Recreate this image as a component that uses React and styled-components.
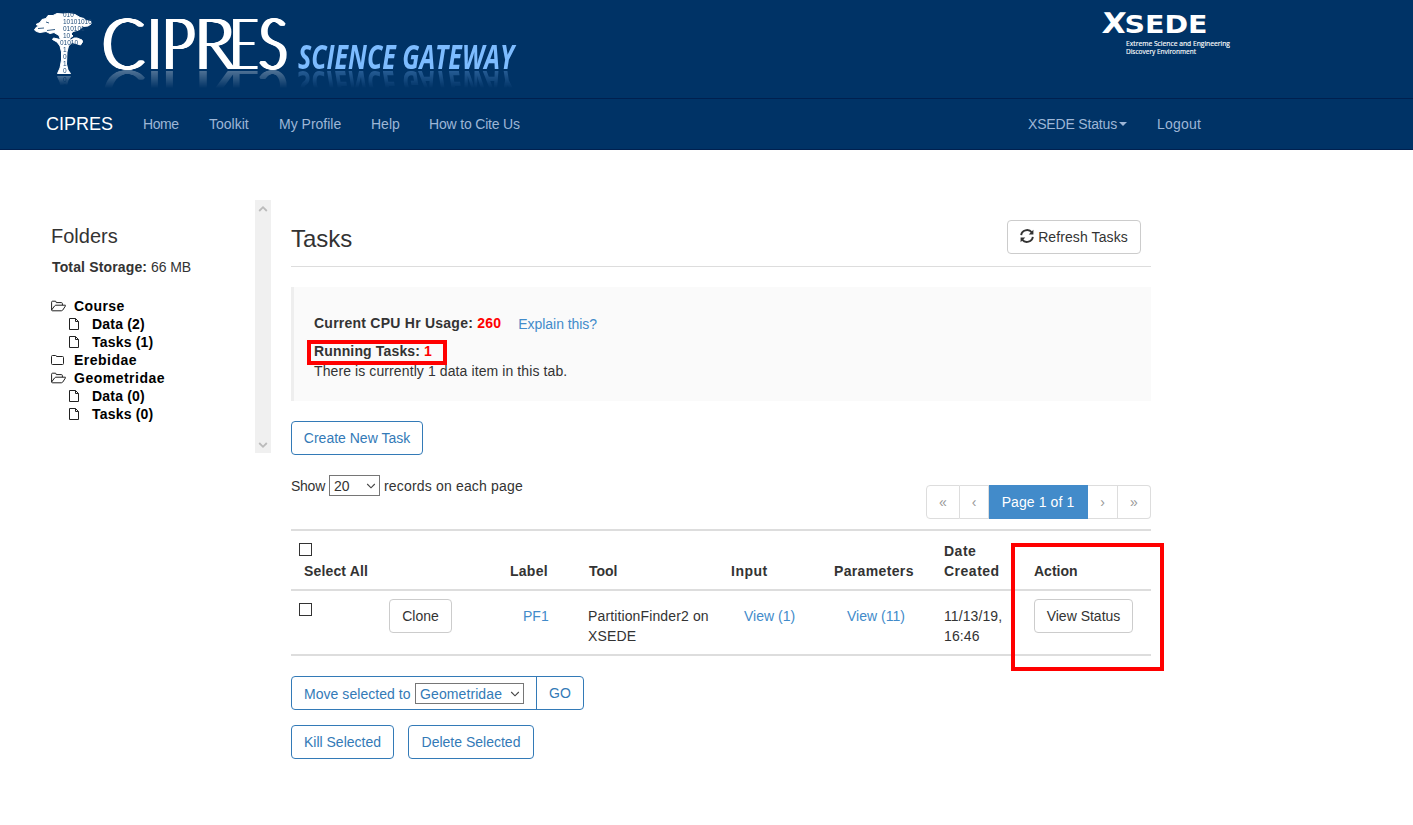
import React from 'react';
import styled, { createGlobalStyle, css } from 'styled-components';

const Global = createGlobalStyle`
  *, *::before, *::after { box-sizing: border-box; }
  body {
    margin: 0;
    background: #fff;
    color: #333;
    font: 14px/20px "Liberation Sans", Arial, sans-serif;
  }
`;

const Page = styled.div`
  min-height: 825px;
  overflow: hidden;
`;

const Banner = styled.header`
  height: 98px;
  background: #003366;
  display: flex;
  padding: 0 173px 0 20px;
`;

const LogoPart = styled.svg`
  display: block;
  flex: none;
  overflow: visible;
  -webkit-box-reflect: below ${(p) => p.$gap || 0}px
    linear-gradient(transparent ${(p) => p.$from}%, rgba(0, 0, 0, 0.32) 100%);
`;

const CipresLetters = styled.g`
  font-family: Lato, sans-serif;
  font-weight: 300;
  font-size: 71px;
  fill: #fff;
  filter: drop-shadow(1px 0 0 #fff) drop-shadow(2px 0 0 #fff) drop-shadow(1px 0 0 #fff);
`;

const Nav = styled.nav`
  height: 52px;
  background: #003366;
  border-top: 1px solid #00204f;
  border-bottom: 1px solid #00204f;
  display: flex;
  align-items: center;
  padding: 0 212px 0 46px;
`;

const Brand = styled.a`
  font-size: 18px;
  color: #fff;
  width: 97px;
`;

const NavLink = styled.a`
  color: #9db6d6;
  margin-right: 30px;
  width: ${(p) => p.$w}px;
  white-space: nowrap;
  letter-spacing: ${(p) => p.$track || 0}px;
  display: flex;
  align-items: center;
  &:last-child { margin-right: 0; }
`;

const Spacer = styled.div`flex: 1;`;

const Caret = styled.span`
  margin-left: 2px;
  border: 4px solid transparent;
  border-top-color: currentColor;
  border-bottom: 0;
`;

const Body = styled.main`
  display: flex;
  padding: 50px 0 0 31px;
`;

const Sidebar = styled.aside`
  width: 240px;
  height: 253px;
  display: flex;
  justify-content: space-between;
`;

const SidebarContent = styled.div`padding: 24px 0 0 20px;`;

const FoldersTitle = styled.h3`
  margin: 0;
  font-size: 20px;
  line-height: 24px;
  font-weight: 400;
`;

const Storage = styled.p`
  margin: 9px 0 20px 1px;
  line-height: 20px;
`;

const T = styled.span`
  letter-spacing: ${(p) => p.$track || 0}px;
  white-space: nowrap;
  ${(p) => p.$bold && css`font-weight: 700;`}
  ${(p) => p.$red && css`color: #f00;`}
`;

const TreeRow = styled.div`
  display: flex;
  align-items: center;
  height: 18px;
  color: #000;
  font-weight: 700;
  letter-spacing: ${(p) => p.$track || 0}px;
  padding-left: ${(p) => (p.$child ? 18 : 0)}px;
  svg { width: 15px; height: 14px; margin-right: 8px; flex: none; }
`;

const ScrollTrack = styled.div`
  width: 16px;
  background: #f0f0f0;
  display: flex;
  flex-direction: column;
  justify-content: space-between;
  align-items: center;
  padding: 5px 0 4px;
  svg { display: block; }
`;

const Content = styled.section`
  width: 860px;
  margin-left: 20px;
  padding-top: 20px;
`;

const TitleBar = styled.div`
  display: flex;
  justify-content: space-between;
  align-items: flex-start;
  height: 47px;
  padding-right: 10px;
  border-bottom: 1px solid #ddd;
`;

const Title = styled.h2`
  margin: 5px 0 0;
  font-size: 24px;
  line-height: 28px;
  font-weight: 400;
`;

const Button = styled.button`
  height: 34px;
  width: ${(p) => p.$w}px;
  padding: 0;
  border: 1px solid ${(p) => (p.$primary ? '#337ab7' : '#ccc')};
  border-radius: 4px;
  background: #fff;
  color: ${(p) => (p.$primary ? '#337ab7' : '#333')};
  font: 14px/20px "Liberation Sans", Arial, sans-serif;
  letter-spacing: ${(p) => p.$track || 0}px;
  display: inline-flex;
  justify-content: center;
  align-items: center;
  white-space: nowrap;
  svg { margin: -2px 4px 0 0; }
`;

const Callout = styled.div`
  margin: 20px 0;
  height: 114px;
  background: #fafafa;
  border-left: 3px solid #eee;
  padding: 26px 20px 0;
`;

const UsageLine = styled.div`
  display: flex;
  height: 28px;
  gap: 17px;
  a { padding-top: 1px; }
`;

const Link = styled.a`
  color: #428bca;
  white-space: nowrap;
  letter-spacing: ${(p) => p.$track || 0}px;
`;

const RunningLine = styled.div`
  position: relative;
  height: 20px;
`;

const Mark = styled.div`
  position: absolute;
  left: ${(p) => p.$x}px;
  top: ${(p) => p.$y}px;
  width: ${(p) => p.$w}px;
  height: ${(p) => p.$h}px;
  border: 4px solid #f00;
  pointer-events: none;
`;

const PagerRow = styled.div`
  display: flex;
  justify-content: space-between;
  align-items: flex-start;
  padding-top: 20px;
  height: 74px;
`;

const ShowLine = styled.div`
  display: flex;
  align-items: center;
  height: 21px;
  gap: 4px;
`;

const SelectBox = styled.div`
  width: ${(p) => p.$w}px;
  height: 21px;
  border: 1px solid #767676;
  background: #fff;
  display: flex;
  align-items: center;
  justify-content: space-between;
  padding: 0 3px 0 4px;
  letter-spacing: ${(p) => p.$track || 0}px;
`;

const Pagination = styled.ul`
  display: flex;
  list-style: none;
  margin: 10px 0 0;
  padding: 0;
`;

const PageItem = styled.li`
  height: 34px;
  width: ${(p) => p.$w}px;
  border: 1px solid #ddd;
  border-left-width: ${(p) => (p.$first ? 1 : 0)}px;
  color: #999;
  display: flex;
  align-items: center;
  justify-content: center;
  white-space: nowrap;
  letter-spacing: ${(p) => p.$track || 0}px;
  &:first-child { border-radius: 4px 0 0 4px; }
  &:last-child { border-radius: 0 4px 4px 0; }
  ${(p) => p.$active && css`background: #428bca; border-color: #428bca; color: #fff;`}
`;

const Table = styled.div`
  position: relative;
  border-top: 2px solid #ddd;
  margin-bottom: 20px;
`;

const Row = styled.div`
  display: grid;
  grid-template-columns: 98px 121px 78px 143px 103px 110px 90px 117px;
  height: ${(p) => p.$h}px;
  border-bottom: 2px solid #ddd;
  ${(p) => p.$head && css`font-weight: 700;`}
`;

const Cell = styled.div`
  padding-top: ${(p) => p.$top || 0}px;
  padding-left: ${(p) => p.$left || 0}px;
  letter-spacing: ${(p) => p.$track || 0}px;
`;

const Checkbox = styled.span`
  display: block;
  width: 13px;
  height: 13px;
  margin: 0 0 5px 8px;
  border: 1px solid #333;
  background: #fff;
`;

const SelectAll = styled.div`
  padding-left: 13px;
  letter-spacing: ${(p) => p.$track || 0}px;
`;

const MoveGroup = styled.div`
  display: inline-flex;
  height: 34px;
  width: 293px;
  border: 1px solid #337ab7;
  border-radius: 4px;
  color: #337ab7;
  margin-bottom: 15px;
`;

const MoveLabel = styled.div`
  width: 245px;
  display: flex;
  align-items: center;
  justify-content: space-between;
  padding: 1px 12px 0;
  border-right: 1px solid #337ab7;
`;

const Go = styled.div`
  flex: 1;
  display: flex;
  align-items: center;
  justify-content: center;
`;

const Actions = styled.div`
  display: flex;
  gap: 14px;
`;

const Chevron = ({ color = '#444', up, w = 10 }) => (
  <svg width={w} height="8" viewBox="0 0 10 8" fill="none" stroke={color} strokeWidth={up === undefined ? 1.1 : 1.8}>
    <path d={up ? 'M1.2 6 5 2.2 8.8 6' : 'M1.2 2 5 5.8 8.8 2'} />
  </svg>
);

const FolderOpen = () => (
  <svg viewBox="0 0 15 14" fill="none" stroke="#222" strokeWidth="1">
    <path d="M.6 11V3.2q0-1 1-1h2.6q1 0 1 1v.4h5.2q1 0 1 1v1.6M.6 11 3.5 7q.6-.8 1.5-.8h9.3q.6.1.1.8L11.8 11q-.5.8-1.5.8H1.5q-.9 0-.9-.8z" />
  </svg>
);

const Folder = () => (
  <svg viewBox="0 0 15 14" fill="none" stroke="#222" strokeWidth="1">
    <path d="M.5 3.5q0-1 1-1h3q1 0 1 1h6q1 0 1 1v6q0 1-1 1h-10q-1 0-1-1z" />
  </svg>
);

const File = () => (
  <svg viewBox="0 0 15 14" fill="none" stroke="#222" strokeWidth="1">
    <path d="M.5 1.5h6l3 3v8h-9zM6.5 1.5v3h3" />
  </svg>
);

const Refresh = () => (
  <svg width="14" height="14" viewBox="0 0 14 14">
    <g fill="none" stroke="#333" strokeWidth="1.9">
      <path d="M1.2 6.1A5.9 5.5 0 0 1 11.8 3.3" />
      <path d="M12.8 7.9A5.9 5.5 0 0 1 2.2 10.7" />
    </g>
    <path fill="#333" d="M13.4.8v4.7H8.7zM.6 13.2v-4.7h4.7z" />
  </svg>
);

const digits = [
  ['010', 63, 16.5], ['10101010', 63, 23.5], ['010101', 63, 30.5], ['10', 63, 37.5],
  ['01010', 60, 44.5], ['1', 63, 51.5], ['0', 63, 58.5], ['1', 63, 65.5], ['0', 63, 72.5],
];

const letters = [
  ['C', 100, 43], ['I', 145.5, 14], ['P', 160, 33], ['R', 192.5, 40], ['E', 228, 28], ['S', 257, 28.5],
];

const TreeLogo = () => (
  <LogoPart width="78" height="75" viewBox="20 0 78 75" $from={86}>
    <path
      fill="#fff"
      stroke="#fff"
      strokeWidth="1"
      strokeLinejoin="round"
      d="M34.5 30 36 27.5 39 26 36 24.5 40 22.5 42 19.5 46 18.5 48 15.5 53 15.5 57 13.5 63 14 68 13.5 75 14.5 80 17.5 84 18.5 86 20.5 91 21.5 91 24 88 26 83 26.5 79 30 73 31.5 71 34 73 36 70 38 70 40.5 74 38 77 38 82 40 82.5 42 80.5 45 76 43.5 72 42.5 68.5 46 67 52 66.5 64 68 70 70.5 73.5 57.5 73.5 60 68 61.5 60 61.5 52 60 46 57 42 52.5 39.5 53.5 38 58 39 60.5 40 59 35.5 54 32.5 50 33.5 46 31.5 40 32.5 36.5 31.5z"
    />
    <path fill="none" stroke="#003366" strokeWidth=".8" d="M38 28.5l6-.5M47 30.500l8-1M46 22l3 1" />
    <g fill="#1d4a78" fontFamily="Liberation Sans" fontSize="7">
      {digits.map(([s, x, y]) => (
        <text key={y} x={x} y={y} textLength={s.length * 3.6} lengthAdjust="spacingAndGlyphs">{s}</text>
      ))}
    </g>
  </LogoPart>
);

const Wordmark = () => (
  <LogoPart width="432" height="70" viewBox="98 0 432 70" $from={74}>
    <CipresLetters>
      {letters.map(([c, x, w]) => (
        <text key={c} x={x} y="69" textLength={w} lengthAdjust="spacingAndGlyphs">{c}</text>
      ))}
    </CipresLetters>
    <g fontFamily="Open Sans" fontSize="34.5" fontWeight="700" fontStyle="italic" fill="#7dbcff">
      <text x="298" y="69" textLength="216" lengthAdjust="spacingAndGlyphs">SCIENCE GATEWAY</text>
    </g>
  </LogoPart>
);

const XsedeLogo = () => (
  <svg width="140" height="70" viewBox="1100 0 140 70" fill="#fff">
    <g fontFamily="DejaVu Sans" fontWeight="700">
      <text transform="translate(1101.5 33) skewX(-4)" fontSize="28.5" textLength="24" lengthAdjust="spacingAndGlyphs">X</text>
      <text x="1124.5" y="32.5" fontSize="25" textLength="83" lengthAdjust="spacingAndGlyphs">SEDE</text>
    </g>
    <g fontFamily="Open Sans" fontSize="7.500" stroke="#fff" strokeWidth=".15">
      <text x="1126" y="46" textLength="104" lengthAdjust="spacingAndGlyphs">Extreme Science and Engineering</text>
      <text x="1126" y="54" textLength="70" lengthAdjust="spacingAndGlyphs">Discovery Environment</text>
    </g>
  </svg>
);

export default function App() {
  return (
    <Page>
      <Global />
      <Banner>
        <TreeLogo />
        <Wordmark />
        <Spacer />
        <XsedeLogo />
      </Banner>
      <Nav>
        <Brand>CIPRES</Brand>
        <NavLink $w={36} $track={-0.4}>Home</NavLink>
        <NavLink $w={40}>Toolkit</NavLink>
        <NavLink $w={62}>My Profile</NavLink>
        <NavLink $w={28}>Help</NavLink>
        <NavLink $w={91} $track={-0.18}>How to Cite Us</NavLink>
        <Spacer />
        <NavLink $w={99} $track={-0.17}>XSEDE Status<Caret /></NavLink>
        <NavLink $w={44} $track={0.2}>Logout</NavLink>
      </Nav>
      <Body>
        <Sidebar>
          <SidebarContent>
            <FoldersTitle>Folders</FoldersTitle>
            <Storage><T $bold $track={0.15}>Total Storage:</T> <T $track={-0.1}>66 MB</T></Storage>
            <TreeRow $track={0.4}><FolderOpen />Course</TreeRow>
            <TreeRow $child $track={0.2}><File />Data (2)</TreeRow>
            <TreeRow $child $track={0.2}><File />Tasks (1)</TreeRow>
            <TreeRow $track={0.5}><Folder />Erebidae</TreeRow>
            <TreeRow $track={0.5}><FolderOpen />Geometridae</TreeRow>
            <TreeRow $child $track={0.2}><File />Data (0)</TreeRow>
            <TreeRow $child $track={0.2}><File />Tasks (0)</TreeRow>
          </SidebarContent>
          <ScrollTrack>
            <Chevron up color="#bbb" />
            <Chevron up={false} color="#bbb" />
          </ScrollTrack>
        </Sidebar>
        <Content>
          <TitleBar>
            <Title>Tasks</Title>
            <Button $w={134} $track={0.1}><Refresh />Refresh Tasks</Button>
          </TitleBar>
          <Callout>
            <UsageLine>
              <T $bold $track={0.24}>Current CPU Hr Usage: <T $red $track={0.24}>260</T></T>
              <Link $track={-0.05}>Explain this?</Link>
            </UsageLine>
            <RunningLine>
              <T $bold $track={0.15}>Running Tasks: <T $red>1</T></T>
              <Mark $x={-7} $y={-1} $w={140} $h={25} />
            </RunningLine>
            <T $track={0.1}>There is currently 1 data item in this tab.</T>
          </Callout>
          <Button $primary $w={132}>Create New Task</Button>
          <PagerRow>
            <ShowLine>
              <T $track={-0.25}>Show</T>
              <SelectBox $w={51}>20<Chevron /></SelectBox>
              <T $track={0.17}>records on each page</T>
            </ShowLine>
            <Pagination>
              <PageItem $first $w={34}>«</PageItem>
              <PageItem $w={29}>‹</PageItem>
              <PageItem $active $w={99} $track={0.1}>Page 1 of 1</PageItem>
              <PageItem $w={30}>›</PageItem>
              <PageItem $w={33}>»</PageItem>
            </Pagination>
          </PagerRow>
          <Table>
            <Row $head $h={60}>
              <Cell $top={12}><Checkbox /><SelectAll $track={0.15}>Select All</SelectAll></Cell>
              <Cell />
              <Cell $top={30} $track={0.25}>Label</Cell>
              <Cell $top={30} $left={1}>Tool</Cell>
              <Cell $top={30} $track={0.5}>Input</Cell>
              <Cell $top={30} $track={0.35}>Parameters</Cell>
              <Cell $top={10} $track={0.5}>Date<br />Created</Cell>
              <Cell $top={30}>Action</Cell>
            </Row>
            <Row $h={65}>
              <Cell $top={12}><Checkbox /></Cell>
              <Cell $top={8}><Button $w={63}>Clone</Button></Cell>
              <Cell $top={15} $left={13}><Link>PF1</Link></Cell>
              <Cell $top={15} $track={0.13}>PartitionFinder2 on<br />XSEDE</Cell>
              <Cell $top={15} $left={13}><Link>View (1)</Link></Cell>
              <Cell $top={15} $left={13}><Link>View (11)</Link></Cell>
              <Cell $top={15} $track={0.1}>11/13/19,<br />16:46</Cell>
              <Cell $top={8}><Button $w={99}>View Status</Button></Cell>
            </Row>
            <Mark $x={720} $y={12} $w={153} $h={128} />
          </Table>
          <MoveGroup>
            <MoveLabel>
              <T $track={0.05}>Move selected to</T>
              <SelectBox $w={109} $track={0.1}>Geometridae<Chevron /></SelectBox>
            </MoveLabel>
            <Go>GO</Go>
          </MoveGroup>
          <Actions>
            <Button $primary $w={103}>Kill Selected</Button>
            <Button $primary $w={126}>Delete Selected</Button>
          </Actions>
        </Content>
      </Body>
    </Page>
  );
}
